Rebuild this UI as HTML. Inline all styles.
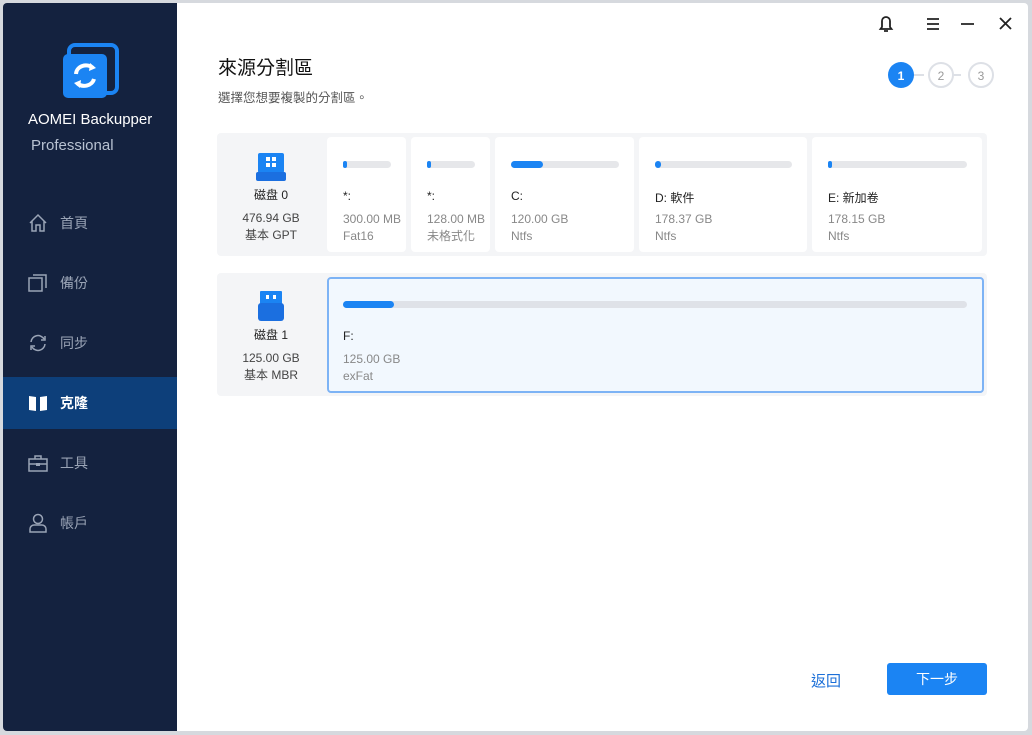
<!DOCTYPE html>
<html><head><meta charset="utf-8"><style>
*{margin:0;padding:0;box-sizing:border-box}
body{width:1032px;height:735px;background:#d6d9de;font-family:"Liberation Sans","Noto Sans CJK TC",sans-serif;position:relative;overflow:hidden}
.win{position:absolute;left:3px;top:3px;width:1025px;height:728px;background:#fff;border-radius:4px;overflow:hidden}
.side{position:absolute;left:0;top:0;width:174px;height:728px;background:#14223f}
.nav{position:absolute;left:0;width:174px;height:52px;color:#9aa4b6;font-size:14px}
.nav span{position:absolute;left:57px;top:16px}
.nav svg{position:absolute;left:25px;top:16px}
.abs{position:absolute}
.grp{position:absolute;left:214px;width:770px;background:#f4f5f7;border-radius:4px}
.card{position:absolute;background:#fff;border-radius:4px;font-size:12px}
.bar{position:absolute;left:16px;top:24px;height:7px;border-radius:4px;background:#e6e7ea}
.bar i{display:block;height:7px;border-radius:4px;background:#1b84f3}
.nm{position:absolute;left:16px;top:52px;color:#222}
.sz{position:absolute;left:16px;top:74px;color:#888;line-height:17px}
.dk{position:absolute;left:0;width:108px;text-align:center;font-size:12px;color:#444}
</style></head><body><div class="win">
<div class="side">
<svg class="abs" style="left:58px;top:40px" width="60" height="58"><rect x="8" y="2" width="48" height="48" rx="6" fill="none" stroke="#1b84f3" stroke-width="4"/><rect x="2" y="11" width="44" height="44" rx="5" fill="#1b84f3"/><path d="M15 31a10 9 0 0 1 17-6" stroke="#fff" stroke-width="4" fill="none"/><path d="M29 20l6 5-7 3z" fill="#fff"/><path d="M33 36a10 9 0 0 1-17 4" stroke="#fff" stroke-width="4" fill="none"/><path d="M19 45l-6-5 7-3z" fill="#fff"/></svg>
<div class="abs" style="left:25px;top:108px;color:#fff;font-size:15px">AOMEI Backupper</div>
<div class="abs" style="left:28px;top:134px;color:#b8c2d2;font-size:15px">Professional</div>
<div class="nav" style="top:194px"><svg width="20" height="20"><path d="M2 10L10 2l8 8M4 8v10h4v-6h4v6h4V8" fill="none" stroke="#9aa4b6" stroke-width="1.5"/></svg><span>首頁</span></div>
<div class="nav" style="top:254px"><svg width="20" height="20"><rect x="1" y="5" width="13" height="13" fill="none" stroke="#9aa4b6" stroke-width="1.5"/><path d="M5 2h13v13" fill="none" stroke="#9aa4b6" stroke-width="1.5"/></svg><span>備份</span></div>
<div class="nav" style="top:314px"><svg width="20" height="20"><path d="M3 9a7 7 0 0 1 13-3M17 11a7 7 0 0 1-13 3" fill="none" stroke="#9aa4b6" stroke-width="1.5"/><path d="M17 3v4h-4M3 17v-4h4" fill="none" stroke="#9aa4b6" stroke-width="1.5"/></svg><span>同步</span></div>
<div class="nav" style="top:374px;background:#0d3f7a;color:#fff;font-weight:bold"><svg width="20" height="20"><path d="M1 3l7 1v14l-7-1zM19 3l-7 1v14l7-1z" fill="#fff"/></svg><span>克隆</span></div>
<div class="nav" style="top:434px"><svg width="20" height="20"><rect x="1" y="6" width="18" height="12" fill="none" stroke="#9aa4b6" stroke-width="1.5"/><path d="M7 6V3h6v3M1 11h18" fill="none" stroke="#9aa4b6" stroke-width="1.5"/><rect x="8" y="10" width="4" height="3" fill="#9aa4b6"/></svg><span>工具</span></div>
<div class="nav" style="top:494px"><svg width="20" height="20"><circle cx="10" cy="6" r="4.5" fill="none" stroke="#9aa4b6" stroke-width="1.5"/><path d="M2 19v-3a4 4 0 0 1 4-4h8a4 4 0 0 1 4 4v3z" fill="none" stroke="#9aa4b6" stroke-width="1.5"/></svg><span>帳戶</span></div>
</div>
<svg class="abs" style="left:870px;top:10px" width="150" height="22"><path d="M9 14V8a4 4 0 0 1 8 0v6l1.5 2h-11zM11 18h4" fill="none" stroke="#222" stroke-width="1.8"/><path d="M54 6h12M54 11h12M54 16h12" stroke="#222" stroke-width="1.8"/><path d="M88 11h13" stroke="#222" stroke-width="1.8"/><path d="M127 5l11 11M138 5l-11 11" stroke="#222" stroke-width="1.8"/></svg>
<div class="abs" style="left:215px;top:50px;font-size:19px;color:#111">來源分割區</div>
<div class="abs" style="left:215px;top:84px;font-size:12.5px;color:#555">選擇您想要複製的分割區。</div>
<svg class="abs" style="left:880px;top:56px" width="120" height="32"><path d="M29 16h12M66 16h12" stroke="#dde0e6" stroke-width="2"/><circle cx="18" cy="16" r="13" fill="#1b84f3"/><text x="18" y="21" text-anchor="middle" font-size="12" font-weight="bold" fill="#fff" font-family="Liberation Sans">1</text><circle cx="58" cy="16" r="12" fill="#fff" stroke="#dde0e6" stroke-width="2"/><text x="58" y="21" text-anchor="middle" font-size="12" fill="#999" font-family="Liberation Sans">2</text><circle cx="98" cy="16" r="12" fill="#fff" stroke="#dde0e6" stroke-width="2"/><text x="98" y="21" text-anchor="middle" font-size="12" fill="#999" font-family="Liberation Sans">3</text></svg>

<div class="grp" style="top:130px;height:123px">
<svg class="abs" style="left:39px;top:20px" width="30" height="30"><rect x="2" y="0" width="26" height="20" rx="2" fill="#1b84f3"/><rect x="0" y="19" width="30" height="9" rx="2" fill="#1b6fe0"/><path d="M10 4h4v4h-4zM16 4h4v4h-4zM10 10h4v4h-4zM16 10h4v4h-4z" fill="#fff"/></svg>
<div class="dk" style="top:53px;color:#222">磁盘 0</div>
<div class="dk" style="top:77px;line-height:17px">476.94 GB<br>基本 GPT</div>
<div class="card" style="left:110px;top:4px;width:79px;height:115px"><div class="bar" style="width:48px"><i style="width:4px"></i></div><div class="nm">*:</div><div class="sz">300.00 MB<br>Fat16</div></div>
<div class="card" style="left:194px;top:4px;width:79px;height:115px"><div class="bar" style="width:48px"><i style="width:4px"></i></div><div class="nm">*:</div><div class="sz">128.00 MB<br>未格式化</div></div>
<div class="card" style="left:278px;top:4px;width:139px;height:115px"><div class="bar" style="width:108px"><i style="width:32px"></i></div><div class="nm">C:</div><div class="sz">120.00 GB<br>Ntfs</div></div>
<div class="card" style="left:422px;top:4px;width:168px;height:115px"><div class="bar" style="width:137px"><i style="width:6px"></i></div><div class="nm">D: 軟件</div><div class="sz">178.37 GB<br>Ntfs</div></div>
<div class="card" style="left:595px;top:4px;width:170px;height:115px"><div class="bar" style="width:139px"><i style="width:4px"></i></div><div class="nm">E: 新加卷</div><div class="sz">178.15 GB<br>Ntfs</div></div>
</div>

<div class="grp" style="top:270px;height:123px">
<svg class="abs" style="left:39px;top:18px" width="30" height="32"><rect x="4" y="0" width="22" height="13" rx="1" fill="#1b84f3"/><rect x="10" y="4" width="3" height="4" fill="#fff"/><rect x="17" y="4" width="3" height="4" fill="#fff"/><rect x="2" y="12" width="26" height="18" rx="3" fill="#1b6fe0"/></svg>
<div class="dk" style="top:53px;color:#222">磁盘 1</div>
<div class="dk" style="top:77px;line-height:17px">125.00 GB<br>基本 MBR</div>
<div class="card" style="left:110px;top:4px;width:657px;height:116px;background:#f2f8fe;border:2px solid #7db3f5"><div class="bar" style="left:14px;width:624px;top:22px;background:#dfe2e8"><i style="width:51px"></i></div><div class="nm" style="left:14px;top:50px">F:</div><div class="sz" style="left:14px;top:72px">125.00 GB<br>exFat</div></div>
</div>

<div class="abs" style="left:808px;top:667px;font-size:15px;color:#1b6fd8">返回</div>
<div class="abs" style="left:884px;top:660px;width:100px;height:32px;background:#1b84f3;border-radius:3px;color:#fff;font-size:14px;text-align:center;line-height:32px">下一步</div>
</div></body></html>
